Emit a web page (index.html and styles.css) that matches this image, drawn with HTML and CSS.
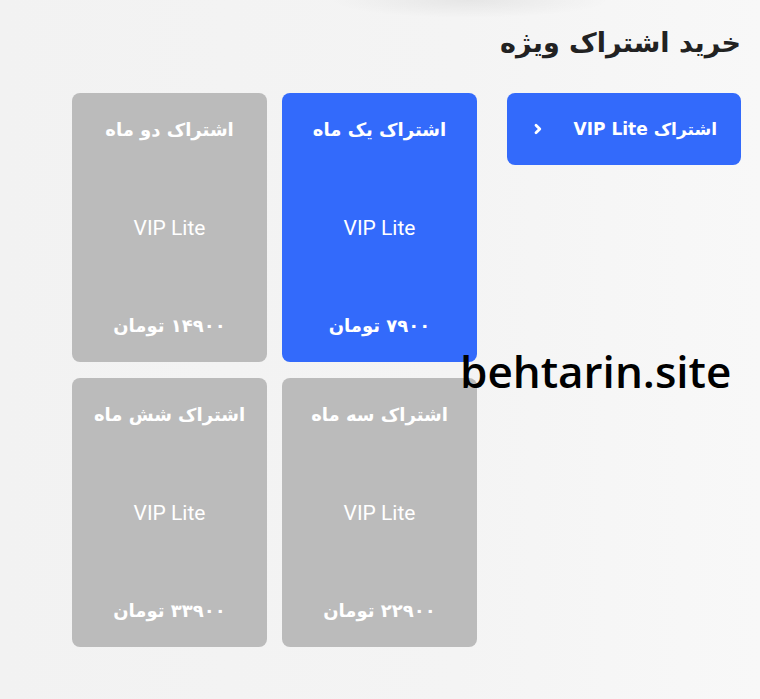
FILE: index.html
```html
<!DOCTYPE html>
<html lang="fa" dir="rtl">
<head>
<meta charset="utf-8">
<link rel="stylesheet" href="styles.css">
</head>
<body>
<div class="page">
  <h1 class="title">خرید اشتراک ویژه</h1>
  <div class="content">
    <aside class="side">
      <button class="plan-btn">
        <span>اشتراک VIP Lite</span>
        <svg class="chev" width="10" height="12" viewBox="0 0 10 12"><path d="M3 2.2 L6.8 6 L3 9.8" fill="none" stroke="#fff" stroke-width="2.8" stroke-linecap="round" stroke-linejoin="round"/></svg>
      </button>
    </aside>
    <div class="cards">
      <div class="card active">
        <div class="card-title">اشتراک یک ماه</div>
        <div class="card-name">VIP Lite</div>
        <div class="card-price">۷۹۰۰ تومان</div>
      </div>
      <div class="card">
        <div class="card-title">اشتراک دو ماه</div>
        <div class="card-name">VIP Lite</div>
        <div class="card-price">۱۴۹۰۰ تومان</div>
      </div>
      <div class="card">
        <div class="card-title">اشتراک سه ماه</div>
        <div class="card-name">VIP Lite</div>
        <div class="card-price">۲۲۹۰۰ تومان</div>
      </div>
      <div class="card">
        <div class="card-title">اشتراک شش ماه</div>
        <div class="card-name">VIP Lite</div>
        <div class="card-price">۳۳۹۰۰ تومان</div>
      </div>
    </div>
  </div>
  <div class="watermark" dir="ltr">behtarin.site</div>
</div>
</body>
</html>
```
FILE: styles.css
```css
* { box-sizing: border-box; }
html, body { margin: 0; padding: 0; }
body {
  background: linear-gradient(90deg, #f2f2f2 0%, #f4f4f4 60%, #f8f8f8 100%);
  font-family: "DejaVu Sans", "Noto Sans", sans-serif;
  width: 760px;
  height: 699px;
  overflow: hidden;
}
.page {
  position: relative;
  padding: 22px 19px 0 0;
  height: 699px;
  background: radial-gradient(ellipse 140px 18px at 470px 0px, rgba(0,0,0,0.06), rgba(0,0,0,0) 100%);
}
.title {
  margin: 0 0 29px 0;
  font-size: 27px;
  line-height: 42px;
  font-weight: bold;
  color: #222;
}
.content {
  display: flex;
  gap: 30px;
  align-items: flex-start;
}
.side { width: 234px; }
.plan-btn {
  width: 234px;
  height: 72px;
  border: none;
  border-radius: 8px;
  background: #336afb;
  color: #fff;
  font-family: "DejaVu Sans", sans-serif;
  font-weight: bold;
  font-size: 17px;
  display: flex;
  align-items: center;
  justify-content: space-between;
  padding: 0 24px 0 26px;
}
.chev { display: block; margin-top: -1px; }
.cards {
  display: grid;
  grid-template-columns: 195px 195px;
  grid-auto-rows: 269px;
  column-gap: 15px;
  row-gap: 16px;
}
.card {
  background: #bbbbbb;
  border-radius: 8px;
  color: #fff;
  display: flex;
  flex-direction: column;
  align-items: center;
  justify-content: space-between;
  padding: 23px 0 22px;
}
.card.active { background: #336afb; }
.card-title, .card-price {
  font-weight: bold;
  font-size: 18px;
  line-height: 28px;
}
.card-name {
  font-family: "Roboto", "Liberation Sans", sans-serif;
  font-size: 21px;
  line-height: 28px;
}
.watermark {
  position: absolute;
  left: 460px;
  top: 341px;
  font-family: "Open Sans", sans-serif;
  font-weight: 600;
  font-size: 44px;
  line-height: 60px;
  color: #000;
}
```
